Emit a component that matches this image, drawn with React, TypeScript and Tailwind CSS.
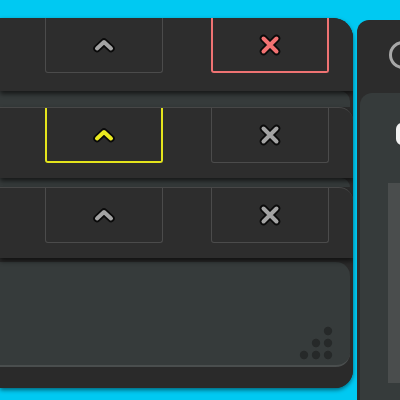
import React from 'react';

type Tone = 'normal' | 'yellow' | 'red';

function Chevron({ tone }: { tone: Tone }) {
  const color = tone === 'yellow' ? '#eaea20' : '#a4a4a4';
  return (
    <svg width="26" height="18" viewBox="0 0 26 18">
      <path d="M6 12.5 L13 6 L20 12.5" fill="none" stroke="#0a0a0a" strokeWidth="7.5" strokeLinecap="round" strokeLinejoin="round" />
      <path d="M6 12.5 L13 6 L20 12.5" fill="none" stroke={color} strokeWidth="4" strokeLinecap="round" strokeLinejoin="round" />
    </svg>
  );
}

function Cross({ tone }: { tone: Tone }) {
  const color = tone === 'red' ? '#f27272' : '#a4a4a4';
  return (
    <svg width="26" height="26" viewBox="0 0 26 26">
      <path d="M6.5 6.5 L19.5 19.5 M19.5 6.5 L6.5 19.5" fill="none" stroke="#0a0a0a" strokeWidth="7.5" strokeLinecap="round" />
      <path d="M6.5 6.5 L19.5 19.5 M19.5 6.5 L6.5 19.5" fill="none" stroke={color} strokeWidth="4" strokeLinecap="round" />
    </svg>
  );
}

function Row({ h, upTone, xTone, top }: { h: number; upTone: Tone; xTone: Tone; top: boolean }) {
  const upBorder = upTone === 'yellow' ? 'border-[#e4e41c] border-x-2 border-b-2' : 'border-[#4b4b4b] border-x-[1.5px] border-b-[1.5px]';
  const xBorder = xTone === 'red' ? 'border-[#ef7373] border-x-2 border-b-2' : 'border-[#4b4b4b] border-x-[1.5px] border-b-[1.5px]';
  return (
    <div
      className={`relative z-10 bg-[#2d2d2d] rounded-tr-[14px] shadow-[0_3px_5px_rgba(0,0,0,0.6)] ${top ? '' : 'border-t border-[#474747]'}`}
      style={{ height: h }}
    >
      <div className="flex h-[55px]">
        <div className="w-[45px]" />
        <div className={`w-[118px] rounded-b-[3px] flex items-center justify-center ${upBorder}`}>
          <Chevron tone={upTone} />
        </div>
        <div className="w-[48px]" />
        <div className={`w-[118px] rounded-b-[3px] flex items-center justify-center ${xBorder}`}>
          <Cross tone={xTone} />
        </div>
      </div>
    </div>
  );
}

function Grip() {
  const dots = [
    [2, 0],
    [1, 1],
    [2, 1],
    [0, 2],
    [1, 2],
    [2, 2],
  ];
  return (
    <svg width="36" height="36" viewBox="0 0 36 36">
      {dots.map(([c, r], i) => (
        <circle key={i} cx={6 + c * 12} cy={6 + r * 12} r="4.2" fill="#262929" />
      ))}
    </svg>
  );
}

export default function App() {
  return (
    <div className="relative w-[400px] h-[400px] overflow-hidden bg-[#00c9f2]" style={{ fontFamily: '"Liberation Sans", sans-serif' }}>
      {/* left window */}
      <div className="absolute left-0 top-[18px] w-[353px] h-[370px] bg-[#2a2a2a] rounded-tr-[20px] rounded-br-[18px] overflow-hidden flex flex-col shadow-[0_2px_4px_rgba(0,0,0,0.5)]">
        <Row h={73} upTone="normal" xTone="red" top />
        <div className="h-[16px] bg-[#363b3b] mr-[3px] rounded-tr-[10px]" />
        <Row h={71} upTone="yellow" xTone="normal" top={false} />
        <div className="h-[9px] bg-[#363b3b] mr-[3px] rounded-tr-[10px]" />
        <Row h={71} upTone="normal" xTone="normal" top={false} />
        <div className="h-[4px]" />
        <div className="relative h-[105px] bg-[#363b3b] mr-[3px] rounded-tr-[14px] rounded-br-[14px] border-b-2 border-[#4a4e4e] flex items-end justify-end pr-[16px] pb-[4px]">
          <Grip />
        </div>
        <div className="flex-1 bg-[#2a2a2a]" />
      </div>

      {/* right window */}
      <div className="absolute left-[357px] top-[20px] w-[60px] h-[385px] bg-[#2c2c2c] rounded-tl-[12px] flex flex-col">
        <div className="h-[73px] relative">
          <div className="absolute left-[32px] top-[21px] w-[28px] h-[28px] rounded-full border-[3px] border-[#a8a8a8]" />
        </div>
        <div className="flex-1 ml-[3px] bg-[#363b3b] rounded-tl-[12px] relative">
          <div className="absolute left-[36px] top-[30px] w-[12px] h-[22px] rounded-full bg-[#f2f2f2]" />
          <div className="absolute left-[28px] top-[90px] w-[20px] h-[200px] bg-[#4a4d4d]" />
        </div>
      </div>
    </div>
  );
}
